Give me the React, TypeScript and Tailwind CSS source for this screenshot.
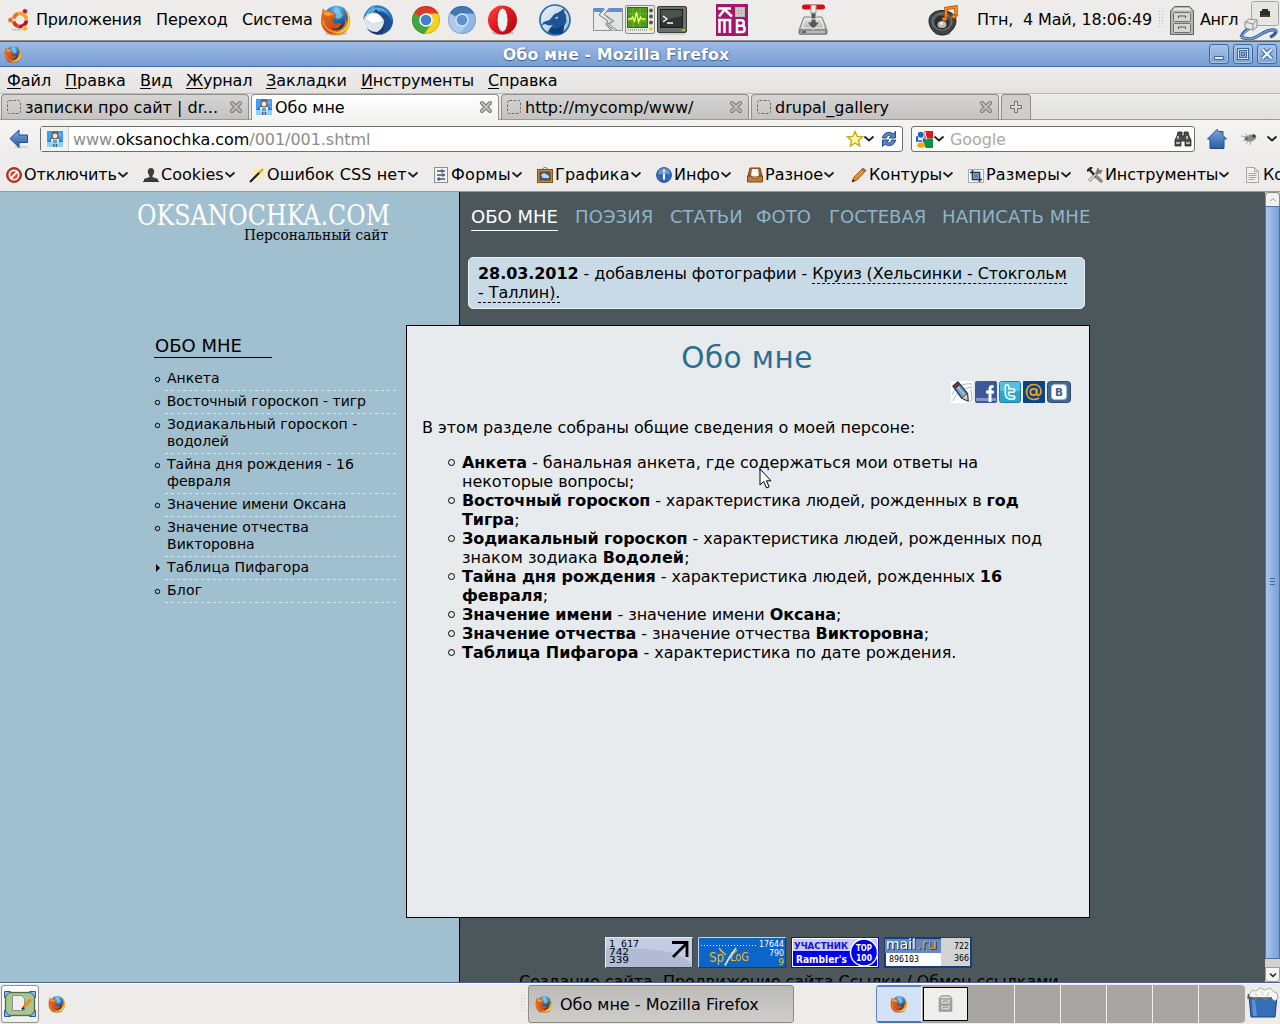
import React from "react";

type P = { s?: number; w?: number; h?: number; vb?: string; className?: string; children?: React.ReactNode };

const Svg = ({ s = 16, w, h, vb = "0 0 32 32", className = "", children }: P) => (
  <svg width={w ?? s} height={h ?? s} viewBox={vb} className={`block shrink-0 ${className}`} fill="none">
    {children}
  </svg>
);

const Defs = () => (
  <svg width="0" height="0" className="absolute">
    <defs>
      <radialGradient id="globe" cx=".5" cy=".15" r=".8">
        <stop offset="0" stopColor="#6fc6f0" />
        <stop offset=".5" stopColor="#2b6fb5" />
        <stop offset="1" stopColor="#102a5c" />
      </radialGradient>
      <linearGradient id="fox" x1="0" y1="0" x2="1" y2="1">
        <stop offset="0" stopColor="#e8731c" />
        <stop offset=".6" stopColor="#d24a10" />
        <stop offset="1" stopColor="#f6b21f" />
      </linearGradient>
      <linearGradient id="bluev" x1="0" y1="0" x2="0" y2="1">
        <stop offset="0" stopColor="#7aa7dc" />
        <stop offset="1" stopColor="#2a5d9f" />
      </linearGradient>
      <linearGradient id="steel" x1="0" y1="0" x2="0" y2="1">
        <stop offset="0" stopColor="#e6e7e4" />
        <stop offset="1" stopColor="#9fa19c" />
      </linearGradient>
      <linearGradient id="redv" x1="0" y1="0" x2="1" y2="1">
        <stop offset="0" stopColor="#ff4a40" />
        <stop offset=".5" stopColor="#e0151c" />
        <stop offset="1" stopColor="#a8060e" />
      </linearGradient>
      <linearGradient id="sky" x1="0" y1="0" x2="1" y2="1">
        <stop offset="0" stopColor="#f2f6fa" />
        <stop offset="1" stopColor="#9db9d6" />
      </linearGradient>
    </defs>
  </svg>
);

const Firefox = ({ s = 32, className }: P) => (
  <Svg s={s} className={className}>
    <ellipse cx="16" cy="29.5" rx="11" ry="2" fill="#00000030" />
    <circle cx="16.5" cy="14.5" r="12.8" fill="url(#globe)" />
    <path d="M15 3c4 1 6 3 5 5l3 3-2 3-4 1-3-4z" fill="#7fd0f2" opacity=".7" />
    <path d="M3 4c1 2 2 3 4 3 3-1 5 0 6 2l3 1c1 1 0 3-2 3l-2 3c1 3 4 4 7 3 2 0 3 1 1 3-3 4-8 3-10 1 3 4 10 4 13 0 3-4 2-8 1-10 3 2 3 4 3 6 2-6-1-12-4-14 5 2 8 8 7 14-1 8-7 12-14 12C7 31 1 25 1 17c0-5 1-9 2-13z" fill="url(#fox)" />
    <path d="M24 5c6 6 5 17-2 21-3 2-7 3-11 2 9 4 18-1 19-10 0-6-2-11-6-13z" fill="#fbc936" />
    <path d="M3 6c0 4 2 5 5 6 2-1 4-1 6-1-3-2-5-4-8-3C4 8 3 7 3 6z" fill="#f9a13a" />
    <path d="M3 16c1 8 7 12 13 12" stroke="#f79a33" strokeWidth="1.5" />
  </Svg>
);

const Thunderbird = () => (
  <Svg s={32}>
    <path d="M10 2h9c7 2 12 8 12 15 0 7-5 12-12 14l-8-4V8z" fill="#1f4f93" />
    <path d="M1 16C2 9 5 5 10 2c11-3 20 5 20 15-3-5-6-8-10-9-7-2-15 1-19 8z" fill="#2c7fc0" />
    <path d="M10 1l3 3c5-1 10 1 13 5-5-3-9-3-13-2-4 0-7 2-9 6 0-5 3-8 6-9z" fill="#62aee0" />
    <path d="M2 15c2-5 6-7 11-6 5 1 8 5 9 10-1 6-5 10-11 10C6 28 2 22 2 15z" fill="#dfe4ec" />
    <path d="M3 15c3-4 6-6 10-6 4 1 7 4 9 8l-11 3z" fill="#fff" stroke="#c4ccd8" strokeWidth=".7" />
    <path d="M5 24c3 3 6 4 10 4 4-2 6-5 7-9 2 6-1 10-6 12-5-1-9-3-11-7z" fill="#1e3770" />
    <circle cx="14" cy="6.500" r="1.100" fill="#12294f" />
  </Svg>
);

const Chrome = ({ blue = false }: { blue?: boolean }) => (
  <Svg s={30} vb="0 0 30 30">
    <circle cx="15" cy="15" r="14" fill={blue ? "#8fb8e4" : "#f7cf1c"} />
    <path d="M15 15L2.9 8A14 14 0 0 0 13 28.9L21 18z" fill={blue ? "#adcbee" : "#3fa648"} />
    <path d="M2.9 8A14 14 0 0 1 27.5 8.500H15v7z" fill={blue ? "#4478b4" : "#dc3a2c"} />
    <circle cx="15" cy="15" r="6.8" fill={blue ? "#d5e5f6" : "#fff"} />
    <circle cx="15" cy="15" r="5.3" fill={blue ? "#5f90ca" : "#3f7fcb"} />
    <circle cx="15" cy="15" r="13.6" stroke="#00000025" />
  </Svg>
);

const Opera = () => (
  <Svg s={32}>
    <ellipse cx="16" cy="29" rx="11" ry="2" fill="#00000030" />
    <ellipse cx="15.500" cy="16" rx="14.500" ry="14.500" fill="url(#redv)" />
    <ellipse cx="15.500" cy="16" rx="5.500" ry="12" fill="#efefef" stroke="#a80d12" strokeWidth=".8" />
  </Svg>
);

const Wolf = () => (
  <Svg s={32}>
    <circle cx="16" cy="16" r="15" fill="url(#sky)" stroke="#2569ae" strokeWidth="1.700" />
    <path d="M2.500 21.500l2-3.500 6-2 5-6 4-1.500L25 4.500l.5 4.500 1.500 2 .5 7-2.500 4-1 7c-5 2-11 2-15-1l2-4 3-3-4 .5-4-1.500z" fill="#1c5496" />
    <path d="M9 28c4 2 10 2.500 15 1l1-8-6 3-3 1-3-1z" fill="#123f7c" />
    <path d="M15.500 14l4-1.500-1.500 2.500z" fill="#dceaf8" />
  </Svg>
);

const BrokenWindow = () => (
  <Svg s={32}>
    <path d="M1.500 4.500H12l-5 6 9 7-1 4 4 5H1.500z" fill="#ebecea" stroke="#8d9199" />
    <path d="M17 4.500h13.500v22H23l-8-6 5-3-8-7z" fill="#e2e4e2" stroke="#8d9199" />
    <path d="M2 4h10L9 8H2zM17 4h13v4H14z" fill="#5f8fd0" />
    <path d="M13 5l-6 6 9 6-3 3 8 7M18 5l-6 5 10 7-5 3 8 6" stroke="#8b8f94" />
  </Svg>
);

const Scope = () => (
  <Svg s={32}>
    <rect x="1.500" y="1.500" width="29" height="28" rx="1.500" fill="#e9e9e6" stroke="#8a8c88" />
    <rect x="3.500" y="3.500" width="20" height="20" fill="#4f9a17" stroke="#35690f" />
    <path d="M4 10h19M4 17h19M9 4v19M16 4v19" stroke="#6fb83a" />
    <path d="M4 15h3l1.500-2 2 4 2-9 2 10 2-5 1 2h4" stroke="#f4ff6a" strokeWidth="1.300" />
    <circle cx="27" cy="6.500" r="2" fill="#555753" /><circle cx="27" cy="12.500" r="2" fill="#555753" /><circle cx="27" cy="18.500" r="2" fill="#555753" />
    <circle cx="27" cy="25" r="1.700" fill="#e5c822" />
    <path d="M4 26h19" stroke="#aaa" strokeDasharray="1 1" strokeWidth="2" />
  </Svg>
);

const Terminal = () => (
  <Svg s={32}>
    <rect x="1.500" y="2.500" width="29" height="26" rx="1.500" fill="#6e706c" stroke="#3b3d3a" />
    <rect x="4.500" y="5.500" width="22" height="18" fill="#2d3433" stroke="#1c1f1e" />
    <path d="M5 6h21v6L5 17z" fill="#4b5350" />
    <path d="M7 12l4 3-4 3M11 19h6" stroke="#fff" strokeWidth="1.300" />
    <rect x="26" y="25.500" width="3" height="1.500" fill="#8ee33c" />
    <path d="M3 30h26" stroke="#bbb" />
  </Svg>
);

const rows = Array.from({ length: 32 }, (_, i) => i);

const Kmb = () => (
  <Svg s={32}>
    <rect width="32" height="32" fill="#e80f14" />
    {rows.map((r) => <path key={r} d={`M${r % 2 ? 1 : 0} ${r + 0.5}H32`} stroke="#a01068" strokeDasharray="1 1" />)}
    <path d="M2 4.500h13M9 5L3 12.500M8 5l8 7.500" stroke="#fff" strokeWidth="2.600" />
    <path d="M3.500 15v14M8.500 15v14M14 15v14M2 16h12" stroke="#fff" strokeWidth="2.500" />
    <path d="M21 15v14M20 16.300h5.500c3 0 3 5.500 0 5.500H21h5c3.500 0 3.500 6.200 0 6.200h-6" stroke="#fff" strokeWidth="2.500" />
    <rect x="19" y="3" width="10" height="10" fill="#b9b9b9" /><path d="M20 5h8M20 8h8M20 11h8" stroke="#dedede" strokeDasharray="2 1" />
  </Svg>
);

const Disk = () => (
  <Svg s={32}>
    <path d="M7 13h18l5 13v4H2v-4z" fill="url(#steel)" stroke="#7c7e7a" />
    <path d="M3 26h26v4H3z" fill="#b9bab7" stroke="#686a66" />
    <path d="M14 8h5v10h4l-7 8-6-8h4z" fill="#55575a" stroke="#d6d6d6" />
    <path d="M8 15h16l3 9H5z" stroke="#f3f3f1" />
    <rect x="5" y="0.500" width="23" height="5" rx="2.500" fill="#d90d10" />
    <path d="M14 1h5v8h-5z" fill="#eee" stroke="#999" />
    <path d="M5 28h4" stroke="#444" strokeWidth="1.500" />
  </Svg>
);

const Speaker = () => (
  <Svg s={32}>
    <ellipse cx="16" cy="30" rx="8" ry="1.500" fill="#00000040" />
    <path d="M2 17C2 11 7 6.500 15 6.500s14 4.500 14 10.500-6 14-14 14S2 23 2 17z" fill="#3f4343" stroke="#1e2020" />
    <ellipse cx="15" cy="17.500" rx="10" ry="8.500" fill="#565a59" stroke="#7b7f7d" />
    <ellipse cx="15" cy="18.500" rx="7.500" ry="7" fill="#2a2d2d" />
    <ellipse cx="15" cy="20.500" rx="4.500" ry="3.500" fill="#b9bcbb" /><circle cx="14.500" cy="19.500" r="1.300" fill="#fff" />
    <path d="M19 15V4.500L29 3v9" stroke="#b24a00" strokeWidth="3.400" /><path d="M19 15V4.500L29 3v9" stroke="#f58a1f" strokeWidth="1.900" />
    <ellipse cx="17.500" cy="15" rx="2.600" ry="1.800" fill="#f58a1f" stroke="#b24a00" /><ellipse cx="27" cy="12.500" rx="2.600" ry="1.800" fill="#f58a1f" stroke="#b24a00" />
  </Svg>
);

const Cabinet = ({ w = 26, h = 31 }: P) => (
  <Svg w={w} h={h} vb="0 0 26 31">
    <path d="M1.500 29.500V6l4-4.500h15L24.500 6v23.500z" fill="#b5b7b2" stroke="#5e605c" />
    <path d="M3.500 5.500L6 3h14l2.500 2.500z" fill="#e6e7e4" />
    <rect x="4.500" y="7.500" width="17" height="9" rx="1" fill="#d5d6d2" stroke="#70726e" />
    <rect x="4.500" y="18.500" width="17" height="9" rx="1" fill="#d5d6d2" stroke="#70726e" />
    <path d="M9.500 13v-2h7v2M9.500 24v-2h7v2" stroke="#555" />
  </Svg>
);

const Network = () => (
  <Svg w={40} h={40} vb="0 0 40 40">
    <rect x="12.500" y="1.500" width="27" height="24" rx="2" fill="#e6e7e4" stroke="#a4a6a2" />
    <path d="M21 17v-6h2V9h6v2h2v6z" fill="#2b2d2b" />
    <path d="M22.500 16h7" stroke="#a58a20" strokeDasharray="1 1" />
    <path d="M2 37c10 4 14 1 22-4 7-4 14-4 13-1-1 2-3 4-6 5M2 37c2-5 5-7 9-9" stroke="#2f5f9e" strokeWidth="3.200" />
    <path d="M2 37c10 4 14 1 22-4 7-4 14-4 13-1M3 36c2-4 5-6 8-7" stroke="#7aa5da" strokeWidth="1.400" />
    <path d="M6 22l4-3 8 1v7l-4 3-8-2z" fill="#e6e7e4" stroke="#8b8d89" /><path d="M6 22l8 2 4-4M14 24v6" stroke="#8b8d89" />
  </Svg>
);

const Ubuntu = () => (
  <Svg s={24} vb="0 0 24 24">
    <ellipse cx="12" cy="21.500" rx="8" ry="1.200" fill="#00000025" />
    <circle cx="13" cy="12" r="6.500" stroke="#edd6c8" strokeWidth="3.400" />
    <path d="M6.700 10.500A6.500 6.500 0 0 1 11 5.800" stroke="#f0701c" strokeWidth="3.600" />
    <path d="M11.500 5.700A6.500 6.500 0 0 1 19.500 11.500" stroke="#f6a21c" strokeWidth="3.600" />
    <path d="M19.500 12.500A6.500 6.500 0 0 1 11.500 18.300" stroke="#b5121b" strokeWidth="3.600" />
    <path d="M11 18.200A6.500 6.500 0 0 1 6.700 13.500" stroke="#d83a1c" strokeWidth="3.600" />
    <circle cx="3.500" cy="12" r="2.600" fill="#ea6a20" stroke="#edeceb" strokeWidth=".6" /><circle cx="18" cy="3.300" r="2.600" fill="#b51d35" stroke="#edeceb" strokeWidth=".6" /><circle cx="18" cy="20.500" r="2.600" fill="#f6b033" stroke="#edeceb" strokeWidth=".6" />
  </Svg>
);

const Chevron = ({ className }: P) => (
  <Svg w={12} h={8} vb="0 0 12 8" className={className}><path d="M1.500 1.500L6 5.500l4.500-4" stroke="#1c1c1c" strokeWidth="1.700" /></Svg>
);

const Dotted = () => (
  <Svg s={16} vb="0 0 16 16"><rect x="1.500" y="1.500" width="13" height="13" rx="2" stroke="#6a6a68" strokeDasharray="2.500 1.500" /></Svg>
);

const Girl = () => (
  <Svg s={16} vb="0 0 16 16">
    <rect width="16" height="16" fill="#1e7fe0" /><path d="M0 0h5v6l-5 5zM11 0h5v10l-5-3z" fill="#3aa0f4" /><path d="M0 11h16v5H0z" fill="#8fd0fa" />
    <path d="M4.500 9V4c0-4 7-4 7 0v5z" fill="#7d5a42" /><circle cx="8" cy="5" r="2.400" fill="#f8e2d2" />
    <path d="M4 8h8v2l-1 3H5l-1-3z" fill="#e9f3f8" /><path d="M6 8.500h4l.5 4h-5z" fill="#69a6b5" /><path d="M6.800 13v3M9.300 13v3" stroke="#5b4a40" strokeWidth="1.200" /><circle cx="13" cy="3.500" r="1.300" fill="#f088b4" />
  </Svg>
);

const CloseX = () => (
  <Svg s={14} vb="0 0 14 14"><path d="M3 3l8 8M11 3l-8 8" stroke="#747471" strokeWidth="4" strokeLinecap="round" /><path d="M3 3l8 8M11 3l-8 8" stroke="#bebebc" strokeWidth="2.200" strokeLinecap="round" /></Svg>
);

const Tab = ({ icon, label, active = false }: { icon: React.ReactNode; label: string; active?: boolean }) => (
  <div className={`flex w-[248px] mr-0.5 shrink-0 items-center rounded-t-[4px] border border-b-0 border-[#8f8f8c] pl-1 pr-[5px] ${active ? "h-[26px] -mb-px pb-px bg-gradient-to-b from-white to-[#f3f3f2]" : "h-[25px] bg-gradient-to-b from-[#d6d5d3] to-[#c4c3c1]"}`}>
    {icon}
    <span className="ml-[3px] flex-1 whitespace-nowrap">{label}</span>
    <CloseX />
  </div>
);

const toolIcons: Record<string, React.ReactNode> = {
  no: <><circle cx="8" cy="8" r="7.500" fill="#c8311f" stroke="#8f2013" strokeWidth=".8" /><circle cx="8" cy="8" r="4.600" stroke="#fff" strokeWidth="1.800" fill="#d9452f" /><path d="M5 11l6-6" stroke="#fff" strokeWidth="2" /></>,
  user: <><path d="M8 1c-3 0-3.500 3-3 5l1.500 3v1L1 12v3h14v-3l-5.500-2V9L11 6c.5-2 0-5-3-5z" fill="#3c3e3b" /><path d="M0 14.500h16" stroke="#333" /></>,
  wand: <><circle cx="10" cy="6" r="5.500" fill="#ffe98a" opacity=".8" /><path d="M10 0v12M4 6h12M6 2l8 8" stroke="#fff3b0" /><path d="M1 15L11 5" stroke="#1c1c1c" strokeWidth="2.200" /><path d="M10 6l4-4" stroke="#c9a13a" strokeWidth="1.800" /></>,
  forms: <><rect x="1.500" y=".5" width="13" height="15" fill="#f2f2f0" stroke="#8d8f8b" /><path d="M4 4h8M4 8h8M4 12h8" stroke="#44566e" strokeWidth="1.300" /><path d="M9 2.500v3M10 6.500v3M6 10.500v3" stroke="#3465a4" strokeWidth="2" /></>,
  image: <><path d="M4 3l4-3 4 3" stroke="#777" /><rect x=".5" y="2.500" width="15" height="13" fill="#c58a34" stroke="#7c5316" /><rect x="3" y="5" width="10" height="8" fill="#2c66ac" stroke="#5d4216" /><path d="M4 8l3-2 5 3v2H6z" fill="#bcdcf4" /></>,
  info: <><circle cx="8" cy="8" r="7.500" fill="#3569b5" stroke="#20468a" strokeWidth=".8" /><path d="M2 7a6 6 0 0 1 12 0z" fill="#6d97d4" /><path d="M8 6.500v6" stroke="#fff" strokeWidth="2" /><circle cx="8" cy="4" r="1.200" fill="#fff" /></>,
  box: <><path d="M3 1h10l2 8H1z" fill="#a5662c" stroke="#7b4616" /><path d="M5 2h6l1 7H4z" fill="#f8f8f5" /><path d="M.5 9h4l1 2h5l1-2h4v6H.5z" fill="#bf7c3c" stroke="#7b4616" /></>,
  pen: <><path d="M1 15l2-5L12 1l3 2.500L6 13z" fill="#e88e2e" stroke="#8f4e0c" strokeWidth=".8" /><path d="M12 1l3 2.500-1.500 1.800-3.200-2.700z" fill="#777" /><path d="M1 15l1-3 2 2z" fill="#1b1b1b" /></>,
  crop: <><rect x=".5" y="2.500" width="15" height="13" fill="#f0f1f3" stroke="#aaa" /><path d="M4.500 3v9.500H14M2 5.500h9.500V15" stroke="#2a3440" strokeWidth="1.500" /><path d="M5.500 6.500h5v5h-5z" fill="#4f86c6" /></>,
  tools: <><path d="M2 14L13 3" stroke="#7c7e7a" strokeWidth="3" /><path d="M11 1l-1 4 3 1 2-3" stroke="#777" strokeWidth="1.500" /><path d="M2 2l8 9" stroke="#2a2a2a" strokeWidth="2.500" /><path d="M10 10l4 4" stroke="#8a8c88" strokeWidth="3.500" strokeLinecap="round" /><path d="M2 14L9 7" stroke="#e4e5e1" strokeWidth="1.600" /><path d="M0 4l5-4" stroke="#222" strokeWidth="2.500" /></>,
  doc: <><path d="M1.500.5h8l4 4v11h-12z" fill="#f0f0ee" stroke="#a5a7a3" /><path d="M9.500.5v4h4M3.500 6.500h8M3.500 8.500h8M3.500 10.500h8M3.500 12.500h6" stroke="#a5a7a3" /></>,
};

const tools: [string, string, string][] = [
  ["no", "Отключить", "w-[137px] tracking-[-0.12px]"], ["user", "Cookies", "w-[106px]"], ["wand", "Ошибок CSS нет", "w-[184px] tracking-[0.1px]"], ["forms", "Формы", "w-[104px] tracking-[0.3px]"],
  ["image", "Графика", "w-[119px] tracking-[0.2px]"], ["info", "Инфо", "w-[91px]"], ["box", "Разное", "w-[104px]"], ["pen", "Контуры", "w-[117px]"],
  ["crop", "Размеры", "w-[119px] tracking-[0.2px]"], ["tools", "Инструменты", "w-[158px] tracking-[-0.1px]"], ["doc", "Консоль", "w-[110px]"],
];

const menu: [string, string][] = [["Файл", "w-[58px]"], ["Правка", "w-[75px]"], ["Вид", "w-[46px]"], ["Журнал", "w-[80px] tracking-[-0.2px]"], ["Закладки", "w-[95px]"], ["Инструменты", "w-[127px] tracking-[-0.15px]"], ["Справка", "w-[80px] tracking-[-0.15px]"]];

const nav: [string, string][] = [["ПОЭЗИЯ", "w-[95px] tracking-[0.1px]"], ["СТАТЬИ", "w-[86px]"], ["ФОТО", "w-[73px]"], ["ГОСТЕВАЯ", "w-[113px]"], ["НАПИСАТЬ МНЕ", "w-[160px] tracking-[0.1px]"]];

const side: [string, string][] = [
  ["Анкета", "tracking-normal"], ["Восточный гороскоп - тигр", "tracking-normal whitespace-nowrap"], ["Зодиакальный гороскоп - водолей", "tracking-[0.03px]"], ["Тайна дня рождения - 16 февраля", "tracking-normal"],
  ["Значение имени Оксана", "tracking-normal"], ["Значение отчества Викторовна", "tracking-[0.04px]"], ["Таблица Пифагора", "tracking-[0.14px]"], ["Блог", "tracking-[0.2px]"],
];

const Win = ({ children }: { children: React.ReactNode }) => (
  <div className="mr-1 h-5 w-5 rounded-[3px] border border-[#3f689e] bg-gradient-to-b from-[#a6c2ea] to-[#7fa3d6] shadow-[inset_0_0_0_1px_#a9c4ea]">
    <Svg s={18} vb="0 0 18 18">{children}</Svg>
  </div>
);

const TopPanel = () => (
  <div className="flex h-[41px] shrink-0 items-center border-b border-[#8f8d8a] bg-[#edeceb] whitespace-nowrap">
    <div className="flex w-[28px] pl-[7px]"><Ubuntu /></div>
    <span className="-mt-px ml-2 w-[120px] tracking-[-0.18px]">Приложения</span>
    <span className="-mt-px w-[86px] tracking-[-0.08px]">Переход</span>
    <span className="-mt-px w-[78px] tracking-[-0.12px]">Система</span>
    <div className="flex w-[42px]"><Firefox /></div>
    <div className="flex w-[49px]"><Thunderbird /></div>
    <div className="flex w-[36px]"><Chrome /></div>
    <div className="flex w-[40px]"><Chrome blue /></div>
    <div className="flex w-[52px]"><Opera /></div>
    <div className="flex w-[53px]"><Wolf /></div>
    <div className="flex w-[32px]"><BrokenWindow /></div>
    <div className="flex w-[32px]"><Scope /></div>
    <div className="flex w-[60px]"><Terminal /></div>
    <div className="flex w-[81px]"><Kmb /></div>
    <div className="flex w-[130px]"><Disk /></div>
    <div className="flex w-[50px]"><Speaker /></div>
    <span className="-mt-px w-[181px] tracking-[-0.16px] whitespace-pre">Птн,  4 Май, 18:06:49</span>
    <Svg w={6} h={18} vb="0 0 6 18"><path d="M1.500 0v18M4.500 0v18" stroke="#b5b4b2" strokeDasharray="1 2" /></Svg>
    <div className="ml-[5px] flex w-[31px]"><Cabinet /></div>
    <span className="-mt-px w-[39px] tracking-[-0.5px]">Англ</span>
    <Network />
  </div>
);

const Chromebars = () => (
  <>
    <div className="flex h-[26px] shrink-0 items-center border-t border-b border-t-[#48648c] border-b-[#3f6ba5] bg-gradient-to-b from-[#9cbae5] to-[#789ed2] pl-1">
      <Firefox s={18} />
      <span className="flex-1 pl-px text-center font-bold text-white [text-shadow:0_1px_1px_#3a5f93,1px_0_1px_#5579ac]">Обо мне - Mozilla Firefox</span>
      <Win><path d="M4.500 11.500h9v3h-9z" fill="#dde9f8" stroke="#3f689e" /></Win>
      <Win><path d="M4.500 4.500h9v9h-9z" stroke="#3f689e" strokeWidth="3" /><path d="M4.500 4.500h9v9h-9z" stroke="#dde9f8" /><path d="M7.500 7.500h3v3h-3z" stroke="#3f689e" /></Win>
      <div className="-mr-1"><Win><path d="M4.500 4.500l9 9M13.500 4.500l-9 9" stroke="#3f689e" strokeWidth="4.500" /><path d="M4.500 4.500l9 9M13.500 4.500l-9 9" stroke="#f0f5fc" strokeWidth="2.300" /></Win></div>
      <div className="w-[3px]" />
    </div>
    <div className="flex h-[27px] shrink-0 items-center border-b border-[#bcbbb9] bg-gradient-to-b from-[#eeedec] to-[#e4e3e1] pl-[7px]">
      {menu.map(([t, w]) => (
        <span key={t} className={`${w} whitespace-nowrap`}><span className="underline decoration-1 underline-offset-2">{t[0]}</span>{t.slice(1)}</span>
      ))}
    </div>
    <div className="flex h-[26px] shrink-0 items-end border-b border-[#9b9a97] bg-gradient-to-b from-[#ececea] to-[#e1e0de] pl-px whitespace-nowrap">
      <Tab icon={<Dotted />} label="записки про сайт | dr..." />
      <Tab active icon={<Girl />} label="Обо мне" />
      <Tab icon={<Dotted />} label="http://mycomp/www/" />
      <Tab icon={<Dotted />} label="drupal_gallery" />
      <div className="flex h-[25px] w-[30px] items-center justify-center rounded-t-[4px] border border-b-0 border-[#8f8f8c] bg-[#cfcecc]">
        <Svg s={14} vb="0 0 14 14"><path d="M5.500 1.500h3v4h4v3h-4v4h-3v-4h-4v-3h4z" fill="#dddcda" stroke="#6f6f6c" /></Svg>
      </div>
    </div>
    <div className="flex h-[38px] shrink-0 items-center bg-gradient-to-b from-[#f4f4f3] to-[#edeceb] pl-[9px]">
      <Svg w={20} h={20} vb="0 0 20 20"><ellipse cx="12" cy="18" rx="7" ry="1.500" fill="#00000018" /><path d="M1 9.500L10 1v5h8.500v7.500H10v5z" fill="url(#bluev)" stroke="#1f4c88" /></Svg>
      <div className="ml-[11px] flex h-[26px] w-[863px] items-center rounded-[3px] border border-[#6f6e6b] bg-white">
        <div className="flex h-full w-7 items-center border-r border-[#cfcfcd] bg-[#f1f1f0] pl-[6px]"><Girl /></div>
        <span className="ml-[4px] flex-1 text-[#8c8c8a] tracking-[-0.04px]">www.<span className="text-black">oksanochka.com</span>/001/001.shtml</span>
        <Svg s={18} vb="0 0 18 18" className="-mr-px"><path d="M9 1.500l2.200 5 5.300.4-4 3.600 1.300 5.500L9 13l-4.800 3 1.300-5.500-4-3.600 5.300-.4z" fill="#fdf5a8" stroke="#c6a512" strokeWidth="1.300" /></Svg>
        <Chevron className="mr-[5px]" />
        <Svg s={18} vb="0 0 18 18" className="mr-[4px]"><path d="M2.500 8C3 3 9 .5 13 4l2.500-2.500V8H9l2-2c-2-1.500-4-.500-4.500 2zM15.500 10c-.5 5-6.500 7.500-10.500 4l-2.500 2.500V10H9l-2 2c2 1.500 4 .5 4.500-2z" fill="#5585c3" stroke="#234b85" /></Svg>
      </div>
      <div className="ml-2 flex h-[26px] w-[284px] items-center rounded-[3px] border border-[#6f6e6b] bg-white pl-1">
        <Svg s={17} vb="0 0 16 16"><path d="M8 0h8v7H8z" fill="#e3131b" /><path d="M6 7h10v9H9z" fill="#0b9444" /><path d="M0 5h2v5H0zM7 6l2 3-2 2z" fill="#1b63c6" /><circle cx="4.500" cy="3.500" r="2.800" fill="#1b63c6" /><path d="M2 9.500h4" stroke="#1b63c6" strokeWidth="1.500" /><ellipse cx="4.800" cy="13.300" rx="3.600" ry="2.500" fill="#f5a90f" /><path d="M9.500 1c-3 3 2 4 0 7" stroke="#fff" /></Svg>
        <Chevron />
        <span className="ml-[5px] flex-1 text-[#aaaaa8] tracking-[-0.1px]">Google</span>
        <Svg s={18} vb="0 0 18 18" className="mr-[2px]"><path d="M4 2h4v4h2V2h4l1 4 2 4v6h-6v-5H7v5H1v-6l2-4z" fill="#4b4e4a" stroke="#20221f" strokeWidth=".8" /><path d="M4 6v3M13 6v3M2 13h4M12 13h4" stroke="#d8d9d5" strokeWidth="1.500" /></Svg>
      </div>
      <Svg s={22} vb="0 0 22 22" className="ml-[11px]"><path d="M11 1.500L1.500 11H4v9.500h14V11h2.500L17 7.500v-4h-3v1z" fill="url(#bluev)" stroke="#1f4c88" /></Svg>
      <Svg s={18} vb="0 0 18 18" className="ml-[12px]"><ellipse cx="11" cy="8" rx="5.500" ry="3.500" fill="#8b8d89" transform="rotate(-20 11 8)" /><path d="M1 6l6 1M3 11l5-2M6 14l3-4M10 15l1-4M5 4l4 3" stroke="#a5a7a3" /><circle cx="6.500" cy="8.500" r="2" fill="#6b6e6a" /><circle cx="14" cy="6" r="1.500" fill="#333" /></Svg>
      <Chevron className="ml-[8px]" />
    </div>
    <div className="flex h-[34px] shrink-0 items-center overflow-hidden border-b border-[#9b9a97] bg-[#edeceb] pl-[6px] whitespace-nowrap">
      {tools.map(([i, t, w]) => (
        <div key={t} className={`flex shrink-0 items-center ${w}`}>
          <Svg s={16} vb="0 0 16 16" className="mr-[2px]">{toolIcons[i]}</Svg>
          <span>{t}</span>
          <Chevron />
        </div>
      ))}
    </div>
  </>
);

const Circle = ({ r = 2 }: { r?: number }) => (
  <Svg s={9} vb="0 0 9 9"><circle cx="4.500" cy="4.500" r={r} stroke="#000" strokeWidth="1" /></Svg>
);

const Li = ({ children, className = "" }: { children: React.ReactNode; className?: string }) => (
  <li className={`flex ${className}`}><span className="mr-[6px] mt-[5px]"><Circle r={3} /></span><span>{children}</span></li>
);

const T = ({ x, y, s = 9, f = "#000", l, w = "normal", ff = "DejaVu Sans", a = "start", children }: { x: number; y: number; s?: number; f?: string; l?: number; w?: string; ff?: string; a?: "start" | "end"; children: string }) => (
  <text x={x} y={y} fontSize={s} fill={f} textLength={l} lengthAdjust="spacingAndGlyphs" fontWeight={w} fontFamily={`"${ff}", sans-serif`} textAnchor={a}>{children}</text>
);

const Share = () => (
  <div className="flex h-[23px] gap-[2px] pr-[18px] justify-end">
    <Svg s={22} vb="0 0 22 22"><path d="M0 0h22v22H0z" fill="#fff" /><path d="M1 14C5 5 12 2 21 3M2 20C5 12 12 7 21 6M20 8l1 11-3 2" stroke="#9fb6cb" /><path d="M2 5l5-4 9.500 11.500L17 20l-6.500-3z" fill="#6f9fc9" stroke="#26384c" strokeWidth="1.300" /><path d="M5 3l9 12" stroke="#cfe2f2" /><path d="M2 5l5-4 2 2.500L4 7.500z" fill="#7a3345" stroke="#26384c" /><path d="M10.500 17l6-4.500L17 20z" fill="#f0c79a" stroke="#26384c" strokeWidth=".8" /></Svg>
    <Svg s={22} vb="0 0 22 22"><rect width="22" height="22" rx="2" fill="#3b5998" /><path d="M1 17h20v3H1z" fill="#8296c2" /><path d="M18.500 5.500h-1.500c-2 0-2 1-2 3V21M11 11h8" stroke="#fff" strokeWidth="3" /></Svg>
    <Svg s={22} vb="0 0 22 22"><rect x=".5" y=".5" width="21" height="21" rx="2" fill="#2fa5cb" stroke="#1c7fa3" /><path d="M1 1h20v9H1z" fill="#55bfdf" /><path d="M8 5.500v7c0 3 1 4 4 4h2M8 9.500h6" stroke="#fff" strokeWidth="5" strokeLinecap="round" strokeLinejoin="round" /><path d="M8 5.500v7c0 3 1 4 4 4h2M8 9.500h6" stroke="#38bfe8" strokeWidth="2" strokeLinecap="round" /></Svg>
    <Svg s={22} vb="0 0 22 22"><rect width="22" height="22" rx="1" fill="#07468a" /><circle cx="10.500" cy="11" r="3.200" stroke="#f5a11c" strokeWidth="1.700" /><path d="M13.700 7.500v5c0 3 4.300 2 4.300-2 0-5-3.500-7-7.500-7S3.500 6.500 3.500 11s3 7.500 7.500 7.500c2 0 3.500-.5 5-1.500" stroke="#f5a11c" strokeWidth="1.700" /></Svg>
    <Svg w={24} h={22} vb="0 0 24 22"><rect x=".5" y=".5" width="23" height="21" rx="3" fill="#45668e" stroke="#2e4a6c" /><rect x="4.500" y="3.500" width="15" height="15" rx="3" fill="#fff" stroke="#a7bcd4" /><T x={8} y={15} s={11} l={8} w="bold" f="#3d5f87">B</T></Svg>
  </div>
);

const Counters = () => (
  <div className="flex gap-[5px] pl-[145px]">
    <Svg w={88} h={31} vb="0 0 88 31"><rect width="88" height="31" fill="#b0bcd6" /><path d="M0 0h88v31C80 14 50 10 0 12z" fill="#c3cce1" /><path d="M.5 30V.5H87" stroke="#e4e9f4" /><path d="M1 30.500h86.500V1" stroke="#39424f" />
      <T x={4} y={10} s={8} l={30} ff="DejaVu Sans Mono">1 617</T><T x={4} y={18} s={8} l={20} ff="DejaVu Sans Mono">742</T><T x={4} y={26} s={8} l={20} ff="DejaVu Sans Mono">339</T>
      <path d="M67 5.500h15V20M81 7L68 20" stroke="#000" strokeWidth="2.800" /></Svg>
    <Svg w={88} h={31} vb="0 0 88 31"><rect width="88" height="31" fill="#0b66c8" /><path d="M.5 30V.5H88" stroke="#b8d4f0" /><path d="M1 30.500h86.500V1" stroke="#003c86" /><path d="M3 8.500h56" stroke="#fff" strokeDasharray="1 2" />
      <T x={86} y={10} s={9} l={25} a="end" f="#fff">17644</T><T x={86} y={19} s={9} l={15} a="end" f="#fff">790</T><T x={86} y={28} s={9} a="end" f="#f2c01c">9</T>
      <T x={11} y={25} s={14} l={15} f="#e8b92a">Sp</T><T x={32} y={24} s={12} l={19} f="#e8b92a">LoG</T>
      <path d="M21 11c2 3 4 5 7 7M39 13c-5 4-9 10-12 16" stroke="#e8b92a" strokeWidth="1.500" /><path d="M38 11c-4 5-8 11-11 17" stroke="#cfe4fa" strokeWidth="1.500" /></Svg>
    <Svg w={88} h={31} vb="0 0 88 31"><rect x=".5" y=".5" width="87" height="30" fill="#0000f0" stroke="#1111cc" /><path d="M1.500 1.500h85v28h-85z" stroke="#fff" /><path d="M2 2h84v12H2z" fill="#c9c9fb" /><circle cx="73" cy="15.500" r="13.500" fill="#0000f0" stroke="#fff" strokeWidth="1.400" />
      <T x={3} y={12} s={9} l={54} w="bold" f="#1212d8">УЧАСТНИК</T><T x={5} y={26} s={10} l={51} w="bold" f="#fff">Rambler's</T><T x={65} y={14} s={8} l={16} w="bold" f="#fff">TOP</T><T x={65} y={24} s={9} l={16} w="bold" f="#fff">100</T></Svg>
    <Svg w={88} h={31} vb="0 0 88 31"><rect width="88" height="31" fill="#123c84" /><path d="M1 2h56v14H1z" fill="#6488c0" /><path d="M2 16h55v13H2z" fill="#fff" /><path d="M57 1h29v28H57z" fill="#d3d3d3" />
      <g className="[filter:drop-shadow(1px_1px_0_#203862)]"><T x={2} y={12} s={14.5} l={30} f="#fff">mail</T><T x={33} y={12} s={14.5} l={20} f="#f29a1c">.ru</T></g>
      <T x={5} y={25} s={8} l={30} ff="DejaVu Sans Mono">896103</T><T x={85} y={12} s={8} l={15} a="end">722</T><T x={85} y={24} s={8} l={15} a="end">366</T></Svg>
  </div>
);

const Page = () => (
  <div className="flex h-[790px] shrink-0 overflow-hidden bg-[#4b575b]">
    <div className="w-[460px] shrink-0 border-r border-black bg-[#a0bfcf]">
      <Svg w={260} h={56} vb="0 0 260 56" className="ml-[137px]">
        <T x={0} y={33} s={28} l={253} f="#fff" ff="DejaVu Serif Condensed">OKSANOCHKA.COM</T>
        <T x={107} y={48} s={14} l={144} ff="DejaVu Serif Condensed">Персональный сайт</T>
      </Svg>
      <div className="ml-[154px] mt-[87px] w-[118px] border-b border-black pl-px text-[18px] leading-[21px]"><div className="h-[22px]">ОБО МНЕ</div></div>
      <ul className="mt-[10px] w-[242px] ml-[154px] text-[14px] leading-[17px]">
        {side.map(([t, c], i) => (
          <li key={t} className="flex">
            <span className="mt-[7px] w-[11px]">
              {i === 6 ? <Svg s={9} vb="0 0 9 9"><path d="M2 0l4 4-4 4z" fill="#000" /></Svg> : <span className="-ml-px block"><Circle r={2.2} /></span>}
            </span>
            <div className="flex-1">
              <div className="pt-[2px] pb-[3px] pl-[2px] pr-[30px]"><span className={c}>{t}</span></div>
              <Svg w={231} h={1} vb="0 0 231 1"><path d="M0 .5h231" stroke="#d9e6ed" strokeDasharray="3 3" /></Svg>
            </div>
          </li>
        ))}
      </ul>
    </div>
    <div className="w-[805px] shrink-0">
      <div className="flex h-[65px] pt-[14px] pl-[11px] text-[18px] leading-[21px] whitespace-nowrap text-[#8fb4c8]">
        <div className="mr-[17px] h-[25px] w-[87px] border-b border-white text-white">ОБО МНЕ</div>
        {nav.map(([t, w]) => <span key={t} className={w}>{t}</span>)}
      </div>
      <div className="ml-2 h-[52px] w-[617px] rounded-[5px] border border-[#e8f0f5] bg-[#c7dae5] px-[9px] pt-[6px] leading-[19px] tracking-[-0.07px] whitespace-nowrap">
        <b>28.03.2012</b> - добавлены фотографии - <span className="border-b border-dashed border-black tracking-[-0.1px]">Круиз (Хельсинки - Стокгольм</span><br />
        <span className="border-b border-dashed border-black">- Таллин).</span>
      </div>
      <div className="relative -ml-[54px] mt-4 h-[593px] w-[684px] border border-black bg-[#e8ebee] pl-[15px] leading-[19px]">
        <h1 className="-ml-[17px] pt-[14px] text-center text-[29.5px] leading-[36px] tracking-[0.42px] text-[#2b6f90]">Обо мне</h1>
        <div className="mt-[5px]"><Share /></div>
        <p className="mt-[14px] tracking-[-0.01px]">В этом разделе собраны общие сведения о моей персоне:</p>
        <ul className="mt-4 ml-[25px] whitespace-nowrap">
          <Li className="tracking-[-0.04px]"><b>Анкета</b> - банальная анкета, где содержаться мои ответы на<br />некоторые вопросы;</Li>
          <Li className="tracking-[-0.12px]"><b>Восточный гороскоп</b> - характеристика людей, рожденных в <b>год<br />Тигра</b>;</Li>
          <Li className="tracking-[-0.08px]"><b>Зодиакальный гороскоп</b> - характеристика людей, рожденных под<br /><span className="tracking-[0.08px]">знаком зодиака <b>Водолей</b>;</span></Li>
          <Li className="tracking-[-0.06px]"><b>Тайна дня рождения</b> - характеристика людей, рожденных <b>16<br />февраля</b>;</Li>
          <Li className="tracking-[-0.05px]"><b>Значение имени</b> - значение имени <b>Оксана</b>;</Li>
          <Li className="tracking-[-0.07px]"><b>Значение отчества</b> - значение отчества <b>Викторовна</b>;</Li>
          <Li className="tracking-[-0.03px]"><b>Таблица Пифагора</b> - характеристика по дате рождения.</Li>
        </ul>
        <Svg w={14} h={22} vb="0 0 14 22" className="absolute left-[352px] top-[142px]"><path d="M1 1v16l3.700-3.500L7.500 20l2.700-1.200-2.800-6H12z" fill="#fff" stroke="#000" /></Svg>
      </div>
      <div className="mt-[19px]"><Counters /></div>
      <p className="mt-[4px] pl-[59px] leading-[19px] tracking-[-0.03px] whitespace-nowrap">Создание сайта, Продвижение сайта Ссылки / Обмен ссылками</p>
    </div>
    <div className="flex w-[15px] shrink-0 flex-col bg-[#d2d1cf]">
      <div className="flex h-[14px] items-center justify-center rounded-t border border-b-0 border-[#8b8a87] bg-[#f1f1f0]"><Svg w={8} h={6} vb="0 0 8 6"><path d="M1 4.500l3-3 3 3" stroke="#999" /></Svg></div>
      <div className="flex h-[753px] flex-col items-center justify-center gap-[2px] border border-[#4a74aa] bg-gradient-to-r from-[#a9c6ee] to-[#7ba1d4] pb-[2px]">
        <div className="h-px w-[5px] bg-[#3f689e]" /><div className="h-px w-[5px] bg-[#3f689e]" /><div className="h-px w-[5px] bg-[#3f689e]" />
      </div>
      <div className="mt-2 flex flex-1 items-center justify-center rounded-b border border-[#9b9a97] bg-[#f4f4f3]"><Svg w={8} h={6} vb="0 0 8 6"><path d="M1 1.500l3 3 3-3" stroke="#222" strokeWidth="1.500" /></Svg></div>
    </div>
  </div>
);

const BottomPanel = () => (
  <div className="flex h-[42px] shrink-0 items-center border-t border-[#44658f] bg-[#edeceb] shadow-[inset_0_1px_0_#fff]">
    <div className="ml-px flex h-[38px] w-[38px] items-center justify-center rounded-[3px] border border-[#92918e] bg-gradient-to-b from-white to-[#efefed]">
      <Svg w={32} h={26} vb="0 0 32 26"><rect x="1.500" y="1.500" width="29" height="23" fill="#a8c78d" stroke="#55694c" strokeWidth="1.300" /><path d="M8.500 4.500h9l3 3v12h-12z" fill="#eee" stroke="#8d8f8b" /><path d="M19.500 16.500l7-8" stroke="#f08a12" strokeWidth="3" /><path d="M18 18.500l2-2" stroke="#222" strokeWidth="2" /><path d="M.5.500h6l-6 6zM31.500.500v6l-6-6zM.5 25.500v-6l6 6zM31.500 25.500h-6l6-6z" fill="#8fb4e2" stroke="#2d5c9e" /></Svg>
    </div>
    <Firefox s={18} className="ml-[9px]" />
    <Svg w={6} h={18} vb="0 0 6 18" className="ml-[454px]"><path d="M1.500 0v18M4.500 0v18" stroke="#c5c4c2" strokeDasharray="1 2" /></Svg>
    <div className="ml-[2px] flex h-[38px] w-[266px] items-center rounded-[3px] border border-[#8b8a87] bg-gradient-to-b from-[#bdbbb8] to-[#cecdca] pl-[6px]">
      <Firefox s={18} /><span className="ml-[7px] mt-[2px]">Обо мне - Mozilla Firefox</span>
    </div>
    <div className="ml-[82px] flex h-[38px] w-[369px] shrink-0 overflow-hidden rounded-[4px] bg-[#a9a5a2]">
      <div className="flex w-[46px] shrink-0 items-center justify-center border-t-2 border-b-2 border-t-[#5b83b8] border-b-[#4a74ab] border-r border-r-white border-l border-l-[#5b83b8] bg-[#d3e2f7]"><Firefox s={18} /></div>
      <div className="my-[2px] ml-px mr-px flex w-[45px] shrink-0 items-center justify-center border border-black bg-[#efefed]"><Cabinet w={15} h={17} /></div>
      {[0, 1, 2, 3, 4].map((k) => <div key={k} className="w-[46px] shrink-0 border-r border-[#f2f1f0]" />)}
    </div>
    <Svg w={32} h={34} vb="0 0 32 34" className="ml-[2px]"><path d="M2 9h28l-2 21H4z" fill="#356db8" stroke="#1c447c" /><path d="M5 13h3l2 16H6z" fill="#5f93d6" /><path d="M2 9l3-6 4 1 4-3 5 2 5-2 4 4 3 1 1 5-3 3-4-3-6 1-6-1-5 1z" fill="#f4f4f2" stroke="#9b9d99" strokeWidth=".8" /><path d="M8 6l2 3M14 4l2 4M22 5l-2 4" stroke="#c0c2be" /><path d="M1.500 7l-.5 4h24" stroke="#50565c" strokeWidth="1.300" /></Svg>
  </div>
);

export default function App() {
  return (
    <div className="flex h-[1024px] w-[1280px] flex-col overflow-hidden text-[16px] leading-[19px] text-black [font-family:'DejaVu_Sans',sans-serif]">
      <Defs />
      <TopPanel />
      <Chromebars />
      <Page />
      <BottomPanel />
    </div>
  );
}
